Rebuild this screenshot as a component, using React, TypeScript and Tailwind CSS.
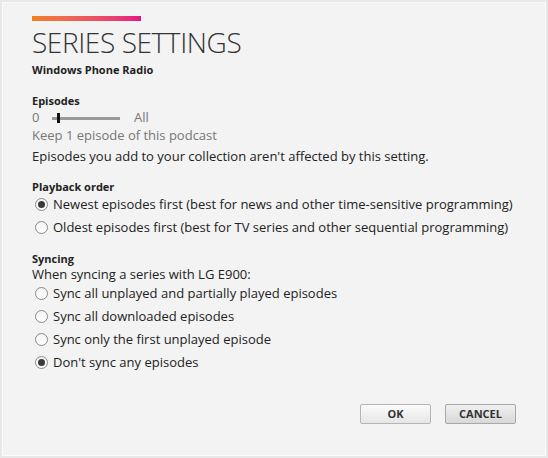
import React from "react";

function Radio({ checked }: { checked?: boolean }) {
  return (
    <span className="relative flex h-[13px] w-[13px] shrink-0 items-center justify-center rounded-full border border-[#8a8a8a] bg-gradient-to-b from-[#f4f4f4] to-white">
      {checked && <span className="h-[7px] w-[7px] rounded-full bg-[#3a3a3a]" />}
    </span>
  );
}

function Option({ label, checked }: { label: string; checked?: boolean }) {
  return (
    <div className="flex h-[23px] items-center gap-[5px] pl-[3px] text-[13px] text-[#222]">
      <Radio checked={checked} />
      <span>{label}</span>
    </div>
  );
}

export default function App() {
  return (
    <div
      className="h-[458px] w-[548px] bg-[#e8e8e8] p-[2px]"
      style={{ fontFamily: '"Open Sans", "Noto Sans", sans-serif' }}
    >
      <div className="h-full w-full border border-[#fafafa] bg-[#f3f3f3] pl-[29px] pt-[13px]">
        <div className="h-[5px] w-[109px] bg-gradient-to-r from-[#f38020] to-[#e4107f]" />
        <div className="mt-[4px] text-[28px] font-light leading-[34px] tracking-[-0.4px] text-[#333]">
          SERIES SETTINGS
        </div>
        <div className="mt-[4px] text-[11px] font-bold leading-[14px] text-[#222]">Windows Phone Radio</div>

        <div className="mt-[17px] text-[11px] font-bold leading-[14px] text-[#222]">Episodes</div>
        <div className="mt-[1px] flex h-[18px] items-center text-[13px] text-[#777]">
          <span className="w-[20px]">0</span>
          <div className="relative flex h-[10px] w-[68px] items-center">
            <div className="h-[3px] w-full bg-[#999]" />
            <div className="absolute left-[5px] top-0 h-[10px] w-[3px] bg-[#111]" />
          </div>
          <span className="ml-[14px]">All</span>
        </div>
        <div className="text-[13px] leading-[16px] text-[#777]">Keep 1 episode of this podcast</div>
        <div className="mt-[4px] text-[13px] leading-[18px] text-[#222]">
          Episodes you add to your collection aren't affected by this setting.
        </div>

        <div className="mt-[16px] text-[11px] font-bold leading-[12px] text-[#222]">Playback order</div>
        <Option checked label="Newest episodes first (best for news and other time-sensitive programming)" />
        <Option label="Oldest episodes first (best for TV series and other sequential programming)" />

        <div className="mt-[13px] text-[11px] font-bold leading-[14px] text-[#222]">Syncing</div>
        <div className="text-[13px] leading-[16px] text-[#222]">When syncing a series with LG E900:</div>
        <Option label="Sync all unplayed and partially played episodes" />
        <Option label="Sync all downloaded episodes" />
        <Option label="Sync only the first unplayed episode" />
        <Option checked label="Don't sync any episodes" />

        <div className="mt-[30px] flex justify-end gap-[14px] pr-[29px]">
          <button className="h-[20px] w-[71px] rounded-[2px] border border-[#b5b5b5] bg-gradient-to-b from-[#fbfbfb] to-[#e6e6e6] text-[11px] font-bold text-[#333]">
            OK
          </button>
          <button className="h-[20px] w-[71px] rounded-[2px] border border-[#a8a8a8] bg-gradient-to-b from-[#f0f0f0] to-[#d8d8d8] text-[11px] font-bold text-[#333]">
            CANCEL
          </button>
        </div>
      </div>
    </div>
  );
}
